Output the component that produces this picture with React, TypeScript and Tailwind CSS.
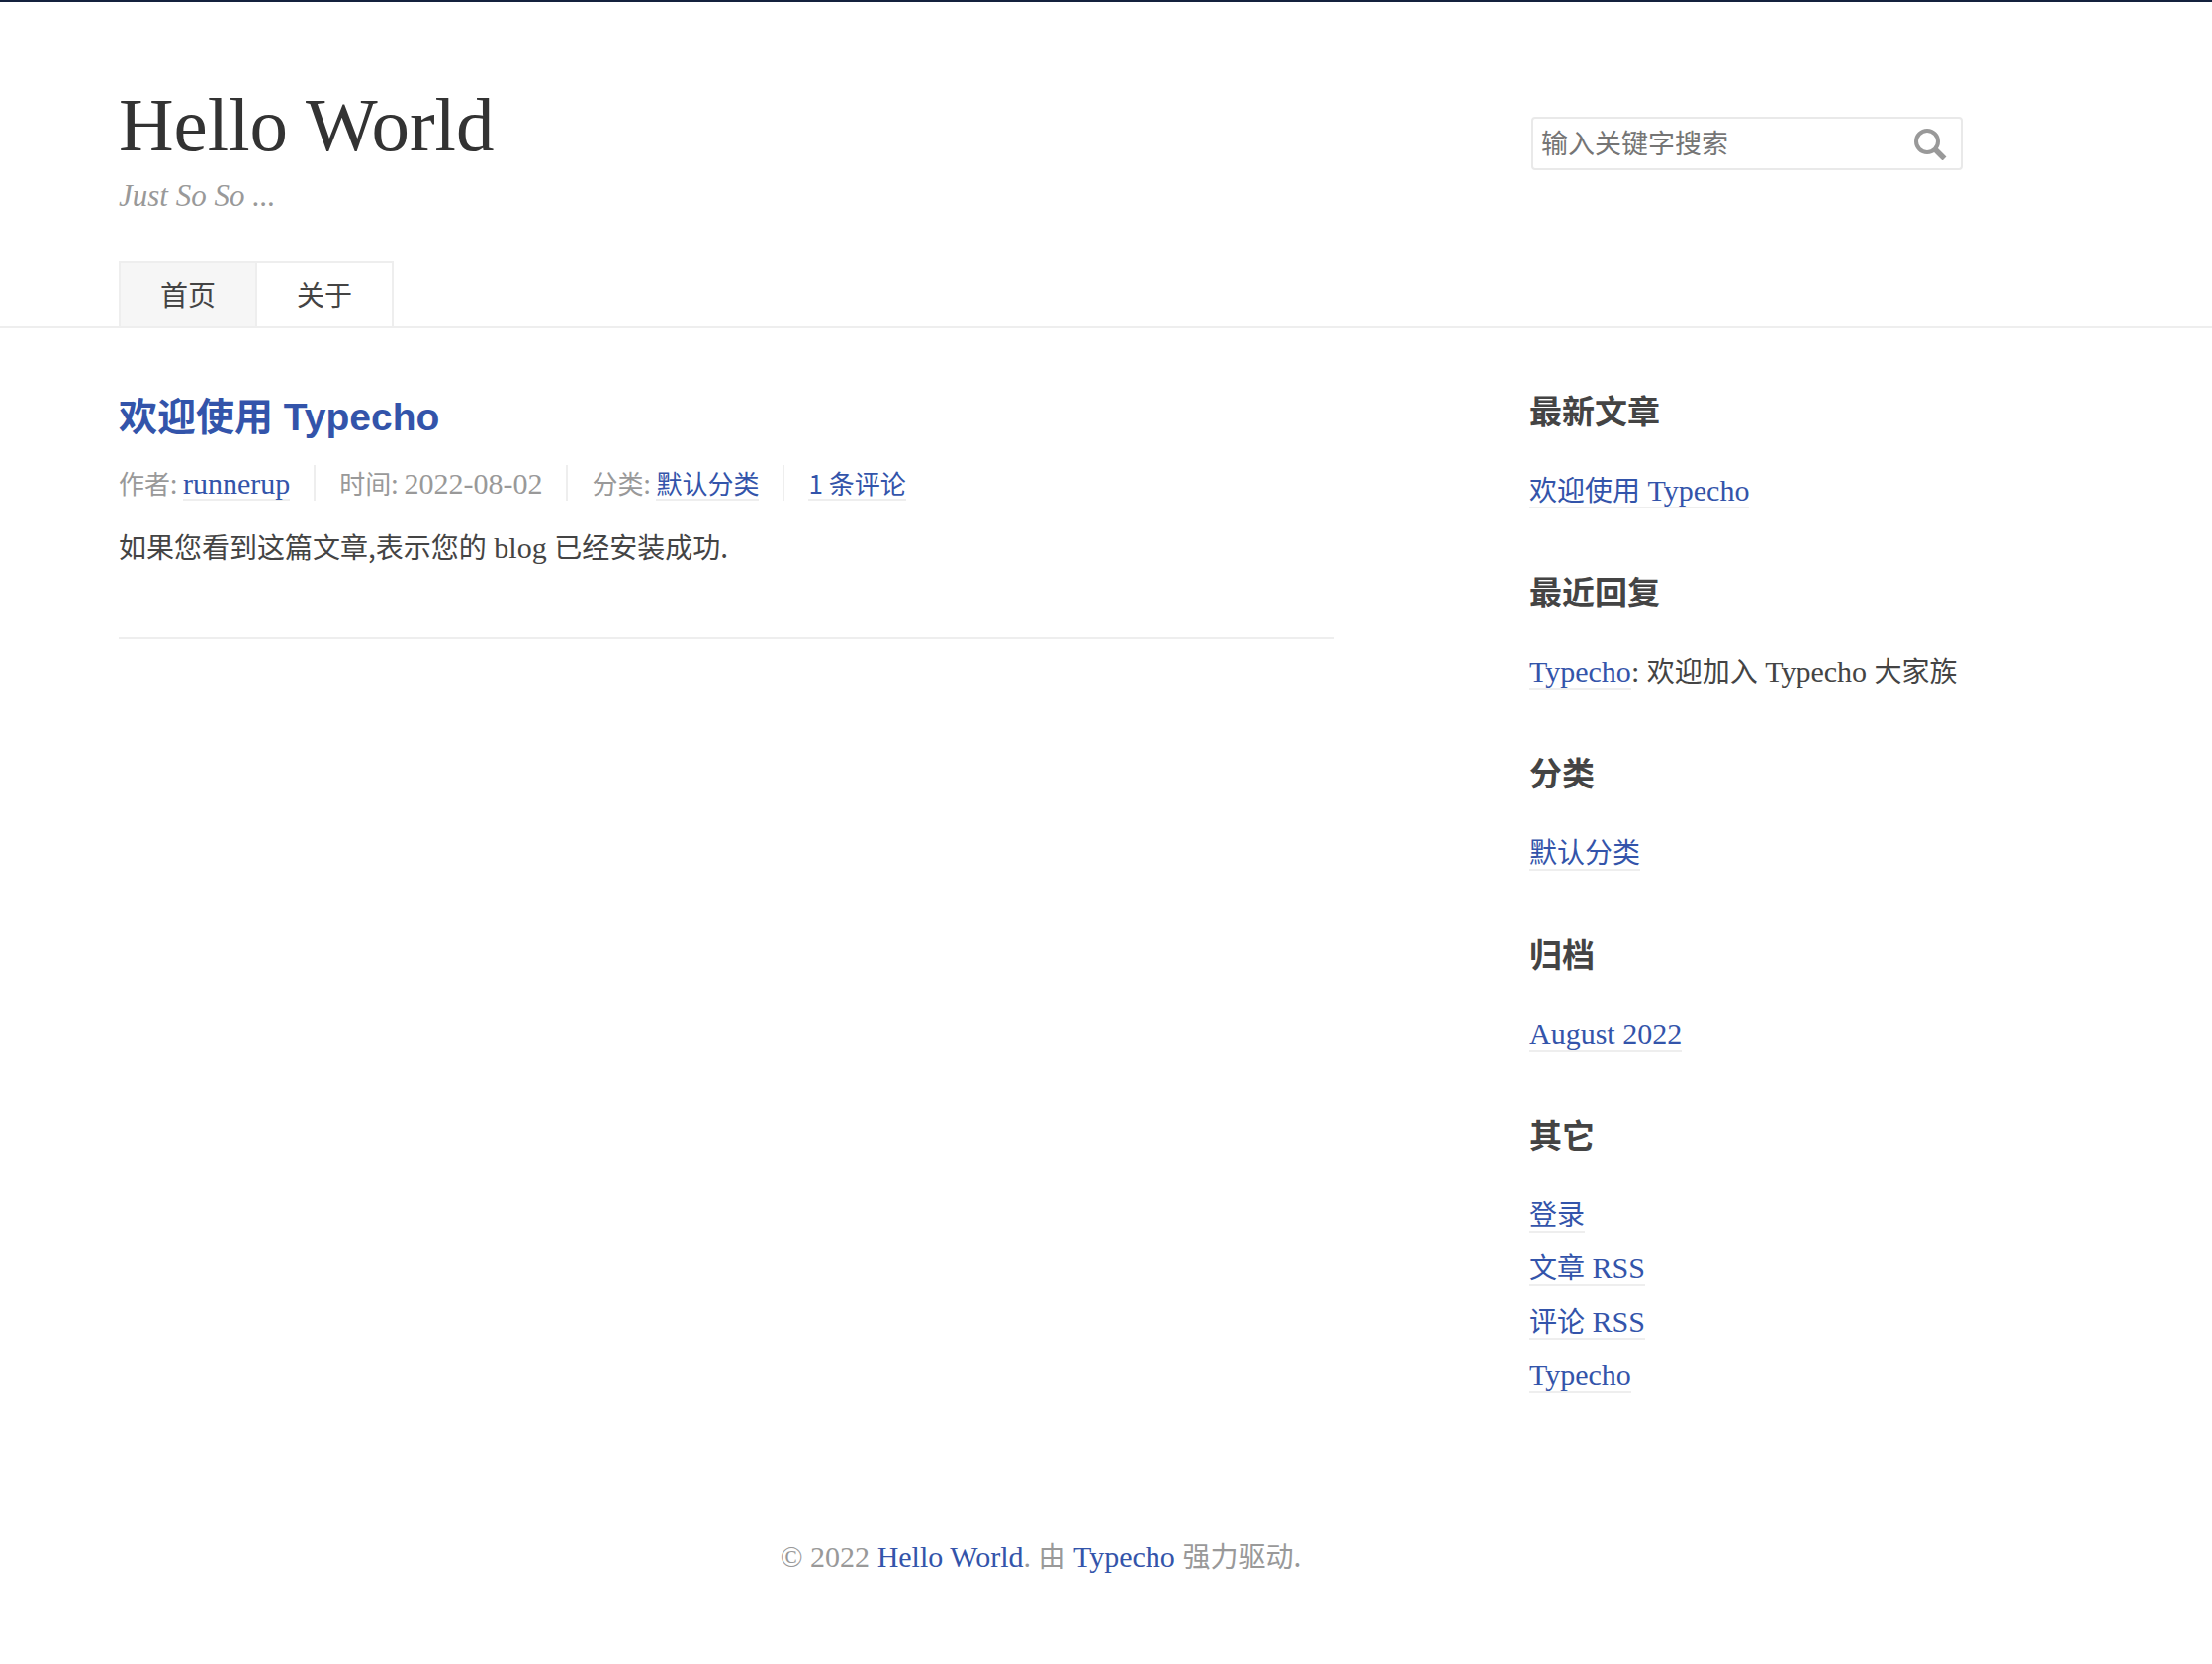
import type { ReactNode } from "react";

function Latin({ children }: { children: ReactNode }) {
  return (
    <span className="font-['Liberation_Serif','Noto_Sans_CJK_SC',serif] text-[30px] leading-0">
      {children}
    </span>
  );
}

function TextLink({ children }: { children: ReactNode }) {
  return (
    <a
      href="#"
      className="inline-block h-full border-b-2 border-[#eeeeee] leading-9 whitespace-nowrap text-[#3354aa]"
    >
      {children}
    </a>
  );
}

function Widget({ title, items }: { title: string; items: ReactNode[] }) {
  return (
    <section>
      <h3 className="text-[33px] leading-10 font-bold">{title}</h3>
      <ul className="mt-[42px] flex flex-col gap-4">
        {items.map((item, i) => (
          <li key={i} className="h-[38px] leading-9 whitespace-nowrap">
            {item}
          </li>
        ))}
      </ul>
    </section>
  );
}

function SearchIcon() {
  return (
    <svg viewBox="0 0 34 34" className="size-[34px]" fill="none" stroke="#999999" aria-hidden="true">
      <circle cx="14" cy="15" r="11" strokeWidth="4" />
      <path d="M21 22 31.5 32.5" strokeWidth="5.5" />
    </svg>
  );
}

export default function App() {
  return (
    <div className="min-h-screen border-t-2 border-[#14213d] bg-white font-['Noto_Sans_CJK_SC',sans-serif] text-[28px] text-[#444444]">
      <header className="border-b-2 border-[#eeeeee] pr-[252px] pl-[120px]">
        <div className="flex items-start justify-between pt-[82px]">
          <div>
            <h1 className="font-['Liberation_Serif',serif] text-[77px] leading-[84px]">
              <a href="#" className="text-[#333333]">
                Hello World
              </a>
            </h1>
            <p className="mt-[10px] font-['Liberation_Serif',serif] text-[31px] leading-10 text-[#999999] italic">
              Just So So ...
            </p>
          </div>
          <form
            role="search"
            onSubmit={(e) => e.preventDefault()}
            className="mt-[34px] flex h-[54px] w-[436px] items-center rounded border-2 border-[#e9e9e9] pr-[14px] pl-2"
          >
            <input
              type="text"
              aria-label="搜索关键字"
              placeholder="输入关键字搜索"
              className="min-w-0 flex-1 bg-transparent pb-[2px] text-[27px] leading-10 outline-none placeholder:text-[#757575]"
            />
            <button type="submit" aria-label="搜索">
              <SearchIcon />
            </button>
          </form>
        </div>
        <nav className="mt-[46px] flex">
          <a
            href="#"
            className="border-2 border-b-0 border-[#eeeeee] bg-[#f6f6f6] px-10 pb-[2px] leading-[62px]"
          >
            首页
          </a>
          <a
            href="#"
            className="border-t-2 border-r-2 border-[#eeeeee] px-10 pb-[2px] leading-[62px]"
          >
            关于
          </a>
        </nav>
      </header>

      <div className="flex gap-[198px] pr-[252px] pl-[120px]">
        <main className="min-w-0 flex-1 pt-16">
          <article className="border-b-2 border-[#eeeeee] pb-[68px]">
            <h2 className="font-['Liberation_Sans','Noto_Sans_CJK_SC',sans-serif] text-[39px] leading-[52px] font-bold">
              <a href="#" className="text-[#3354aa]">
                欢迎使用 Typecho
              </a>
            </h2>
            <ul className="mt-[22px] flex h-9 text-[26px] leading-9 text-[#999999]">
              <li className="mr-6 border-r-2 border-[#eeeeee] pr-6">
                作者:{" "}
                <TextLink>
                  <Latin>runnerup</Latin>
                </TextLink>
              </li>
              <li className="mr-6 border-r-2 border-[#eeeeee] pr-6">
                时间:{" "}
                <time dateTime="2022-08-02">
                  <Latin>2022-08-02</Latin>
                </time>
              </li>
              <li className="mr-6 border-r-2 border-[#eeeeee] pr-6">
                分类: <TextLink>默认分类</TextLink>
              </li>
              <li>
                <TextLink>1 条评论</TextLink>
              </li>
            </ul>
            <p className="mt-[22px] leading-[48px]">
              如果您看到这篇文章,表示您的<Latin> blog </Latin>已经安装成功.
            </p>
          </article>
        </main>

        <aside className="flex w-[438px] flex-col gap-[63px] pt-[62px]">
          <Widget
            title="最新文章"
            items={[
              <TextLink>
                欢迎使用<Latin> Typecho</Latin>
              </TextLink>,
            ]}
          />
          <Widget
            title="最近回复"
            items={[
              <>
                <TextLink>
                  <Latin>Typecho</Latin>
                </TextLink>
                <Latin>: </Latin>欢迎加入<Latin> Typecho </Latin>大家族
              </>,
            ]}
          />
          <Widget title="分类" items={[<TextLink>默认分类</TextLink>]} />
          <Widget
            title="归档"
            items={[
              <TextLink>
                <Latin>August 2022</Latin>
              </TextLink>,
            ]}
          />
          <Widget
            title="其它"
            items={[
              <TextLink>登录</TextLink>,
              <TextLink>
                文章<Latin> RSS</Latin>
              </TextLink>,
              <TextLink>
                评论<Latin> RSS</Latin>
              </TextLink>,
              <TextLink>
                <Latin>Typecho</Latin>
              </TextLink>,
            ]}
          />
        </aside>
      </div>

      <footer className="pt-[140px] pr-[252px] pb-20 pl-[120px] text-center leading-[48px] text-[#999999]">
        <Latin>
          © 2022{" "}
          <a href="#" className="text-[#3354aa]">
            Hello World
          </a>
          .{" "}
        </Latin>
        由
        <Latin>
          {" "}
          <a href="#" className="text-[#3354aa]">
            Typecho
          </a>{" "}
        </Latin>
        强力驱动.
      </footer>
    </div>
  );
}
